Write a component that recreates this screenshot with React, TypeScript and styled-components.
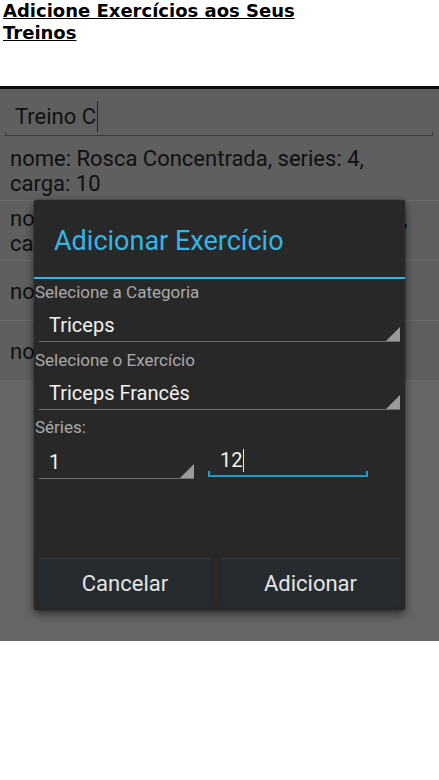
import React from "react";
import styled, { createGlobalStyle } from "styled-components";

const GlobalStyle = createGlobalStyle`
  html, body {
    margin: 0;
    padding: 0;
    background: #fff;
  }
  body {
    font-family: "Roboto", "Liberation Sans", sans-serif;
  }
`;

type Exercise = {
  line: string;
};

const exercises: Exercise[] = [
  { line: "nome: Rosca Concentrada, series: 4, carga: 10" },
  { line: "nome: Rosca Direta na Barra W, series: 3, carga: 20" },
  { line: "nome: Supino, series: 3, carga: 20" },
  { line: "nome: Remada, series: 4, carga: 15" },
];

const App = () => {
  return (
    <Page>
      <GlobalStyle />
      <Heading>Adicione Exercícios aos Seus Treinos</Heading>
      <Screen>
        <Content>
          <NameField>
            <FieldText>Treino C</FieldText>
            <DarkCursor />
          </NameField>
          <List>
            {exercises.map((item, i) => (
              <Row key={i}>
                <RowText>{item.line}</RowText>
              </Row>
            ))}
          </List>
        </Content>

        <Dialog>
          <TitleBar>
            <Title>Adicionar Exercício</Title>
          </TitleBar>
          <Divider />
          <Label $top={3}>Selecione a Categoria</Label>
          <Spinner>
            <SpinnerText>Triceps</SpinnerText>
          </Spinner>
          <Label $top={8}>Selecione o Exercício</Label>
          <Spinner>
            <SpinnerText>Triceps Francês</SpinnerText>
          </Spinner>
          <Label $top={7}>Séries:</Label>
          <SeriesRow>
            <Spinner $width={155}>
              <SpinnerText>1</SpinnerText>
            </Spinner>
            <NumberField>
              <SpinnerText>12</SpinnerText>
              <LightCursor />
            </NumberField>
          </SeriesRow>
          <Buttons>
            <DialogButton>Cancelar</DialogButton>
            <DialogButton>Adicionar</DialogButton>
          </Buttons>
        </Dialog>
      </Screen>
    </Page>
  );
};

const Page = styled.div`
  width: 439px;
  height: 780px;
  background: #fff;
  overflow: hidden;
`;

const Heading = styled.h1`
  margin: 0;
  padding: 0 0 0 3px;
  width: 310px;
  height: 86px;
  box-sizing: border-box;
  font-family: "DejaVu Sans", sans-serif;
  font-size: 18px;
  font-weight: bold;
  line-height: 22px;
  text-decoration: underline;
  color: #000;
`;

const Screen = styled.div`
  position: relative;
  height: 555px;
  box-sizing: border-box;
  border-top: 3px solid #0e0e0e;
  background: #666666;
`;

const Content = styled.div`
  background: #5f5f5f;
`;

const NameField = styled.div`
  position: relative;
  display: flex;
  align-items: center;
  margin: 0 6px 6px 5px;
  padding: 12px 10px 3px;
  &::after {
    content: "";
    position: absolute;
    left: 0;
    right: 0;
    bottom: -1px;
    height: 3px;
    border: 1px solid #3c3c3c;
    border-top: none;
  }
`;

const FieldText = styled.span`
  font-size: 22px;
  line-height: 26px;
  color: #111;
`;

const DarkCursor = styled.span`
  display: inline-block;
  width: 1px;
  height: 31px;
  margin-left: 1px;
  background: #222;
`;

const List = styled.ul`
  margin: 0;
  padding: 0;
  list-style: none;
`;

const Row = styled.li`
  display: flex;
  align-items: center;
  box-sizing: border-box;
  min-height: 60px;
  padding: 5px 10px 4px;
  border-bottom: 1px solid #6a6a6a;
`;

const RowText = styled.span`
  font-size: 22px;
  line-height: 25px;
  color: #101010;
`;

const Dialog = styled.div`
  position: absolute;
  top: 111px;
  left: 34px;
  width: 371px;
  height: 410px;
  display: flex;
  flex-direction: column;
  background: #282828;
  border-radius: 2px;
  box-shadow: 0 4px 10px rgba(0, 0, 0, 0.55), 0 0 2px rgba(0, 0, 0, 0.5);
`;

const TitleBar = styled.div`
  height: 77px;
  display: flex;
  align-items: center;
  padding: 4px 0 0 20px;
  box-sizing: border-box;
`;

const Title = styled.h2`
  margin: 0;
  font-size: 27px;
  font-weight: 400;
  color: #33b5e5;
`;

const Divider = styled.div`
  height: 2px;
  background: #33b5e5;
`;

const Label = styled.div<{ $top: number }>`
  margin-top: ${(p) => p.$top}px;
  padding-left: 1px;
  font-size: 17px;
  line-height: 20px;
  color: #a9a9a9;
`;

const Spinner = styled.div<{ $width?: number }>`
  position: relative;
  margin: 0 5px;
  padding: 11px 10px 4px;
  border-bottom: 1px solid #6d6d6d;
  ${(p) => (p.$width ? `width: ${p.$width}px; box-sizing: border-box; margin: 0;` : "")}
  &::after {
    content: "";
    position: absolute;
    right: 0;
    bottom: 0;
    width: 0;
    height: 0;
    border-left: 14px solid transparent;
    border-bottom: 14px solid #9a9a9a;
  }
`;

const SpinnerText = styled.span`
  font-size: 20px;
  line-height: 24px;
  color: #f2f2f2;
`;

const SeriesRow = styled.div`
  display: flex;
  align-items: flex-end;
  gap: 14px;
  padding-left: 5px;
`;

const NumberField = styled.div`
  position: relative;
  display: flex;
  align-items: center;
  width: 160px;
  box-sizing: border-box;
  padding: 11px 12px 5px;
  margin-bottom: 2px;
  &::after {
    content: "";
    position: absolute;
    left: 0;
    right: 0;
    bottom: 0;
    height: 4px;
    border: 2px solid #1e9bcb;
    border-top: none;
  }
`;

const LightCursor = styled.span`
  display: inline-block;
  width: 1px;
  height: 23px;
  margin-left: 1px;
  background: #e6e6e6;
`;

const Buttons = styled.div`
  margin-top: auto;
  display: grid;
  grid-template-columns: 172px 1fr;
  gap: 10px;
  padding: 0 5px 3px;
`;

const DialogButton = styled.button`
  height: 49px;
  border: none;
  border-top: 1px solid #383d42;
  border-radius: 2px;
  background: #262b2f;
  font-family: "Roboto", sans-serif;
  font-size: 22px;
  color: #e4e4e4;
  cursor: pointer;
`;

export default App;
